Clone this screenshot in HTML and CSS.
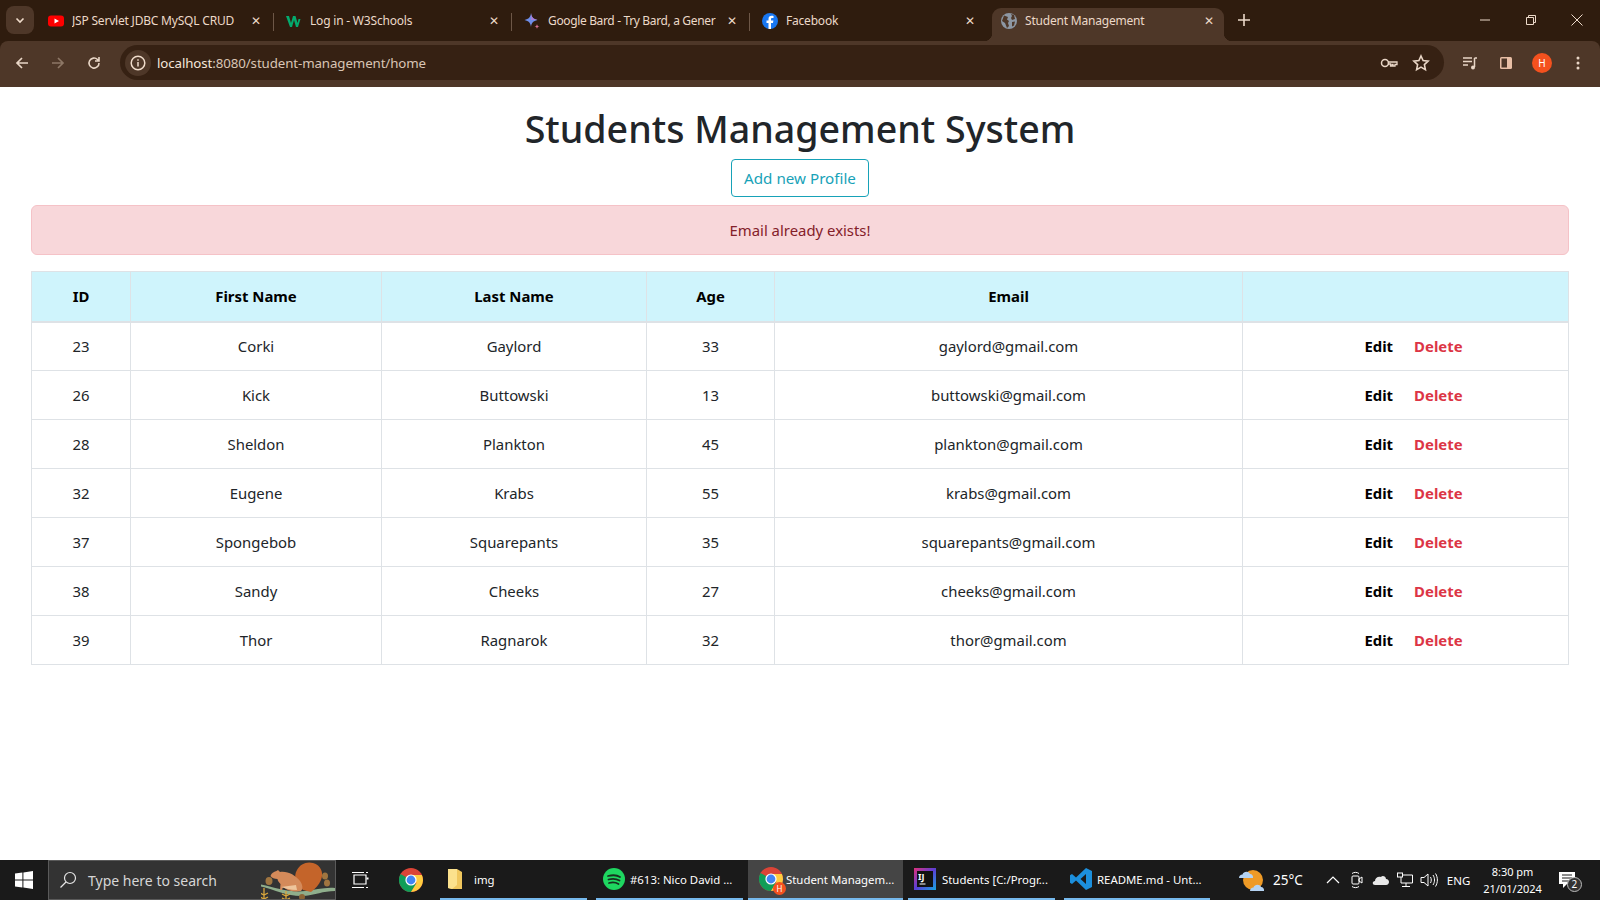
FILE: index.html
```html
<!DOCTYPE html>
<html lang="en">
<head>
    <meta charset="UTF-8">
    <title>Student Management</title>
    <link rel="stylesheet" href="styles.css">
</head>
<body>
    <div class="browser">
        <div class="tab-strip">
            <div class="tab-search">
                <svg width="12" height="12" viewBox="0 0 12 12"><path d="M2.500 4.500 6 8l3.500-3.500" fill="none" stroke="#f0dccb" stroke-width="1.600"/></svg>
            </div>
            <div class="tab">
                <svg class="favicon" viewBox="0 0 16 16"><rect y="2.500" width="16" height="11" rx="3" fill="#f00"/><path d="M6.500 5.500v5L11 8z" fill="#fff"/></svg>
                <span class="tab-title">JSP Servlet JDBC MySQL CRUD</span>
                <span class="tab-close">✕</span>
            </div>
            <div class="tab">
                <svg class="favicon" viewBox="0 0 16 16"><path d="M0 3h3l2 7 2-7h2.500l2 7 1-4h2l-2.500 8h-2L8 7l-2 7H4z" fill="#04aa6d"/></svg>
                <span class="tab-title">Log in - W3Schools</span>
                <span class="tab-close">✕</span>
            </div>
            <div class="tab">
                <svg class="favicon" viewBox="0 0 16 16"><path d="M7 0c.5 4.200 2.200 6 6.500 7C9.200 8 7.500 9.800 7 14 6.500 9.800 4.800 8 .5 7 4.800 6 6.500 4.200 7 0z" fill="#6f8ee8"/><path d="M7 0c.5 4.200 2.200 6 6.500 7H7z" fill="#a87fd8"/><path d="M13 11c.2 1.500.8 2.100 2.500 2.500-1.700.4-2.300 1-2.500 2.500-.2-1.500-.8-2.100-2.500-2.500 1.700-.4 2.300-1 2.500-2.500z" fill="#d56f8f"/></svg>
                <span class="tab-title tab-title-long">Google Bard - Try Bard, a Gener</span>
                <span class="tab-close">✕</span>
            </div>
            <div class="tab">
                <svg class="favicon" viewBox="0 0 16 16"><circle cx="8" cy="8" r="8" fill="#1877f2"/><path d="M9 16v-6h2l.4-2.400H9V6.200c0-.8.300-1.200 1.200-1.200h1.300V3c-.6-.1-1.200-.2-1.800-.2-2 0-3.200 1.200-3.200 3.200v1.600H4.500V10h2v6z" fill="#fff"/></svg>
                <span class="tab-title">Facebook</span>
                <span class="tab-close">✕</span>
            </div>
            <div class="tab tab-active">
                <svg class="favicon" viewBox="0 0 16 16"><circle cx="8" cy="8" r="8" fill="#8d97a3"/><path d="M3 2.500 7 4 6 6.500 8 8l-1 2 1 3-2 2-2-5-3-2zM10 1l3 1 1 4-3 1-1-2 1-2zM11 9l3-.5-1 4-2 1z" fill="#4e3728"/></svg>
                <span class="tab-title">Student Management</span>
                <span class="tab-close">✕</span>
            </div>
            <svg class="new-tab" width="12" height="12" viewBox="0 0 12 12"><path d="M6 0v12M0 6h12" stroke="#ecd9c9" stroke-width="1.600"/></svg>
            <div class="window-controls">
                <svg width="12" height="12" viewBox="0 0 12 12"><path d="M1 6h10" stroke="#ecd9c9"/></svg>
                <svg width="12" height="12" viewBox="0 0 12 12"><path d="M1.500 3.500h7v7h-7zM3.500 3.500v-2h7v7h-2" fill="none" stroke="#ecd9c9"/></svg>
                <svg width="12" height="12" viewBox="0 0 12 12"><path d="M.5.500l11 11M11.500.500l-11 11" stroke="#ecd9c9"/></svg>
            </div>
        </div>
        <div class="toolbar">
            <svg class="nav-icon" viewBox="0 0 16 16"><path d="M14 8H3M8 3 3 8l5 5" fill="none" stroke="#e9d6c6" stroke-width="1.700"/></svg>
            <svg class="nav-icon" viewBox="0 0 16 16"><path d="M2 8h11M8 3l5 5-5 5" fill="none" stroke="#8d7766" stroke-width="1.700"/></svg>
            <svg class="nav-icon" viewBox="0 0 16 16"><path d="M13 8a5 5 0 1 1-1.500-3.500L13 6M13 2v4H9" fill="none" stroke="#e9d6c6" stroke-width="1.600"/></svg>
            <div class="omnibox">
                <div class="site-info">
                    <svg width="16" height="16" viewBox="0 0 16 16"><circle cx="8" cy="8" r="6.800" fill="none" stroke="#f0dccb" stroke-width="1.500"/><path d="M8 7v4.500M8 4.300v1.500" stroke="#f0dccb" stroke-width="1.500"/></svg>
                </div>
                <span class="url">localhost<span class="url-rest">:8080/student-management/home</span></span>
                <svg class="omni-icon" viewBox="0 0 18 18"><circle cx="5" cy="9" r="3.500" fill="none" stroke="#e9d6c6" stroke-width="1.500"/><path d="M8.500 8H17v2.500h-2V12h-2v-1.500h-1V12h-1.500v-2H8.500z" fill="none" stroke="#e9d6c6" stroke-width="1.300"/></svg>
                <svg class="omni-icon" viewBox="0 0 18 18"><path d="m9 2 2.100 4.600 5 .6-3.700 3.400 1 5L9 13.100l-4.400 2.500 1-5L1.900 7.200l5-.6z" fill="none" stroke="#e9d6c6" stroke-width="1.600"/></svg>
            </div>
            <div class="toolbar-right">
                <svg class="nav-icon" viewBox="0 0 16 16"><path d="M1 3h9M1 6.500h9M1 10h5" stroke="#e9d6c6" stroke-width="1.500"/><path d="M12.500 3H15M12.500 3v9" stroke="#e9d6c6" stroke-width="1.500"/><circle cx="11" cy="12.500" r="2" fill="#e9d6c6"/></svg>
                <svg class="nav-icon side-icon" viewBox="0 0 16 16"><rect x="2" y="2" width="12" height="12" rx="1.500" fill="#e9bfa6"/><rect x="3.500" y="3.500" width="5.500" height="9" fill="#4e3728"/></svg>
                <div class="avatar">H</div>
                <svg class="nav-icon" viewBox="0 0 16 16"><circle cx="8" cy="3" r="1.500" fill="#e9d6c6"/><circle cx="8" cy="8" r="1.500" fill="#e9d6c6"/><circle cx="8" cy="13" r="1.500" fill="#e9d6c6"/></svg>
            </div>
        </div>
    </div>

    <main class="page">
        <h1 class="page-title">Students Management System</h1>
        <div class="add-row"><a class="add-btn" href="#">Add new Profile</a></div>
        <div class="alert">Email already exists!</div>
        <table class="students">
            <colgroup>
                <col class="col-id"><col class="col-first"><col class="col-last"><col class="col-age"><col class="col-email"><col>
            </colgroup>
            <thead>
                <tr><th>ID</th><th>First Name</th><th>Last Name</th><th>Age</th><th>Email</th><th></th></tr>
            </thead>
            <tbody>
                <tr><td>23</td><td>Corki</td><td>Gaylord</td><td>33</td><td>gaylord@gmail.com</td><td class="actions"><a class="edit" href="#">Edit</a><a class="delete" href="#">Delete</a></td></tr>
                <tr><td>26</td><td>Kick</td><td>Buttowski</td><td>13</td><td>buttowski@gmail.com</td><td class="actions"><a class="edit" href="#">Edit</a><a class="delete" href="#">Delete</a></td></tr>
                <tr><td>28</td><td>Sheldon</td><td>Plankton</td><td>45</td><td>plankton@gmail.com</td><td class="actions"><a class="edit" href="#">Edit</a><a class="delete" href="#">Delete</a></td></tr>
                <tr><td>32</td><td>Eugene</td><td>Krabs</td><td>55</td><td>krabs@gmail.com</td><td class="actions"><a class="edit" href="#">Edit</a><a class="delete" href="#">Delete</a></td></tr>
                <tr><td>37</td><td>Spongebob</td><td>Squarepants</td><td>35</td><td>squarepants@gmail.com</td><td class="actions"><a class="edit" href="#">Edit</a><a class="delete" href="#">Delete</a></td></tr>
                <tr><td>38</td><td>Sandy</td><td>Cheeks</td><td>27</td><td>cheeks@gmail.com</td><td class="actions"><a class="edit" href="#">Edit</a><a class="delete" href="#">Delete</a></td></tr>
                <tr><td>39</td><td>Thor</td><td>Ragnarok</td><td>32</td><td>thor@gmail.com</td><td class="actions"><a class="edit" href="#">Edit</a><a class="delete" href="#">Delete</a></td></tr>
            </tbody>
        </table>
    </main>

    <footer class="taskbar">
        <div class="start">
            <svg width="18" height="18" viewBox="0 0 18 18"><path d="M0 2.600 7.400 1.600v7H0zM8.400 1.400 18 0v8.600H8.400zM0 9.500h7.400v7L0 15.400zM8.400 9.500H18V18l-9.600-1.400z" fill="#fff"/></svg>
        </div>
        <div class="search-box">
            <svg width="18" height="18" viewBox="0 0 18 18"><circle cx="11" cy="7" r="5.500" fill="none" stroke="#e6e6e6" stroke-width="1.200"/><path d="M7 11 1.500 16.500" stroke="#e6e6e6" stroke-width="1.200"/></svg>
            <span class="search-text">Type here to search</span>
            <svg class="squirrel" width="74" height="40" viewBox="0 0 74 40">
                <path d="M-2 23c16 3 30 9 46 7 10-1 20-4 30-3v3c-12 0-20 4-31 5-16 1-30-7-45-10z" fill="#8fae8c"/>
                <path d="M42 29c-7-6-10-13-6-20 3-6 10-9 16-7 8 2 11 10 8 17-2 5-6 9-10 12z" fill="#c4642a"/>
                <path d="M17 9l2 2c8-1 15 3 20 9 3 4 3 8 1 10-6 1-12 0-15-2l-3-2-1 3h-2l.5-6c-2-2-3-4-3-5-3 0-6-1-7-3 1-3 3-4 6-5z" fill="#d48a5a"/>
                <path d="M20 26c4 1 9 3 16 3l-1-5c-5 1-10 1-15 2z" fill="#eec59c"/>
                <ellipse cx="8" cy="20" rx="3.500" ry="4" fill="#a07540"/>
                <ellipse cx="64" cy="15" rx="3" ry="3.500" fill="#a07540"/>
                <ellipse cx="66" cy="22" rx="3" ry="3.500" fill="#a07540"/>
                <ellipse cx="41" cy="36" rx="3" ry="3" fill="#8c6536"/>
                <path d="M3 27v12M-1 32l4 2 4-2M-1 36l4 2 4-2M25 30v9M21 33l4 2 4-2M21 37l4 2 4-2" fill="none" stroke="#d9a63c" stroke-width="1.300"/>
            </svg>
        </div>
        <div class="pinned">
            <svg width="18" height="18" viewBox="0 0 18 18"><path d="M3 4h12v9H3zM1 1.500h12M1 16.500h12M15 1.500h2M15 16.500h2" fill="none" stroke="#fff" stroke-width="1.200"/><path d="M15.500 6.500h2v2h-2z" fill="#fff"/></svg>
        </div>
        <div class="pinned pinned-chrome">
            <svg width="24" height="24" viewBox="0 0 24 24"><use href="#chrome-logo"/></svg>
        </div>
        <div class="task-item task-files">
            <svg width="16" height="22" viewBox="0 0 16 22"><path d="M0 1h9l5 3v17H4l-4-1z" fill="#f0c75e"/><path d="M0 1h9v16l-5 4-4-1z" fill="#fbe18d"/></svg>
            <span>img</span>
        </div>
        <div class="task-item task-spotify">
            <svg width="22" height="22" viewBox="0 0 22 22"><circle cx="11" cy="11" r="11" fill="#1ed760"/><path d="M5 8c4-1 9-1 12 1M5.500 11.500c3.500-1 8-.7 11 1M6 15c3-.8 7-.6 9.500 1" fill="none" stroke="#17301f" stroke-width="1.800" stroke-linecap="round"/></svg>
            <span>#613: Nico David ...</span>
        </div>
        <div class="task-item task-active">
            <div class="chrome-badge">
                <svg width="24" height="24" viewBox="0 0 24 24"><use href="#chrome-logo"/></svg>
                <span class="badge-h">H</span>
            </div>
            <span>Student Managem...</span>
        </div>
        <div class="task-item task-idea">
            <svg width="22" height="22" viewBox="0 0 22 22"><defs><linearGradient id="idea-edge" x1="0" y1="0" x2="1" y2="1"><stop offset="0" stop-color="#e0317c"/><stop offset=".5" stop-color="#5a3fd6"/><stop offset="1" stop-color="#17a6e0"/></linearGradient></defs><rect width="22" height="22" fill="url(#idea-edge)"/><rect x="3" y="3" width="16" height="16" fill="#111"/><path d="M5.500 16h6" stroke="#fff"/></svg>
            <span class="idea-letters">IJ</span>
            <span>Students [C:/Progr...</span>
        </div>
        <div class="task-item task-code">
            <svg width="24" height="24" viewBox="0 0 24 24"><path d="M17 1 23 4v16l-6 3L7 13.500 3 17l-2-1.200V8.200L3 7l4 3.500zM17 7l-5.500 5 5.500 5z" fill="#1c8fdc"/></svg>
            <span>README.md - Unt...</span>
        </div>
        <div class="tray">
            <svg width="28" height="28" viewBox="0 0 28 28"><circle cx="14" cy="14" r="10" fill="#ee9a26"/><path d="M0 12c0-2 1.500-3.500 3.500-3.500C4.500 5 10 5 11 8c2 0 3.500 2 3 4z" fill="#b5d3f2"/><path d="M11 25c0-2 1.500-3.500 3.500-3.500 1-3.500 6.500-3.500 7.500-.5 2 0 3.500 2 3 4z" fill="#b5d3f2"/></svg>
            <span class="tray-temp">25°C</span>
            <span class="tray-slot tray-first"><svg width="14" height="14" viewBox="0 0 14 14"><path d="M1 10l6-6 6 6" fill="none" stroke="#fff" stroke-width="1.200"/></svg></span>
            <span class="tray-slot"><svg width="16" height="18" viewBox="0 0 16 18"><rect x="3" y="5" width="7" height="8" rx="1" fill="none" stroke="#fff"/><path d="M10 8l3-2v6l-3-2zM3 2.500c2-1.500 5-1.500 7 0M3 15.500c2 1.500 5 1.500 7 0" fill="none" stroke="#fff"/></svg></span>
            <span class="tray-slot"><svg width="18" height="12" viewBox="0 0 18 12"><path d="M3 11c-3 0-3-4 0-4 0-3 3-5 6-4 1-2 5-1 5 2 4 0 4 6 0 6z" fill="#e8e8e8"/></svg></span>
            <span class="tray-slot"><svg width="16" height="16" viewBox="0 0 16 16"><path d="M4 3h11.500v8H4zM9 11v3M5 14.500h8" fill="none" stroke="#fff"/><rect x=".5" y="1" width="5" height="4" fill="#1a1a1a" stroke="#fff"/></svg></span>
            <span class="tray-slot"><svg width="18" height="16" viewBox="0 0 18 16"><path d="M1 5.500h3L8 2v12l-4-3.500H1zM10.500 5c1 2 1 4 0 6M13 3c2 3 2 7 0 10M15.500 1.500c2.500 4 2.500 9 0 13" fill="none" stroke="#fff"/></svg></span>
            <span class="tray-lang">ENG</span>
            <div class="clock"><span>8:30 pm</span><span>21/01/2024</span></div>
            <div class="notify">
                <svg width="18" height="16" viewBox="0 0 18 16"><path d="M0 0h16v12H8l-4 4v-4H0z" fill="#fff"/><path d="M3 3h10M3 6h10M3 9h7" stroke="#1a1a1a"/></svg>
                <span class="notify-count">2</span>
            </div>
        </div>
    </footer>

    <svg class="defs" width="0" height="0">
        <defs>
            <g id="chrome-logo">
                <circle cx="12" cy="12" r="12" fill="#db4437"/>
                <path d="M12 12 1.600 6A12 12 0 0 0 12 24l5-8z" fill="#0f9d58"/>
                <path d="M12 7h10.900A12 12 0 0 1 12 24l5.500-9z" fill="#ffcd40"/>
                <circle cx="12" cy="12" r="5.600" fill="#fff"/>
                <circle cx="12" cy="12" r="4.400" fill="#4285f4"/>
            </g>
        </defs>
    </svg>
</body>
</html>
```

FILE: styles.css
```css
* {
    box-sizing: border-box;
}

html, body {
    height: 100%;
}

body {
    margin: 0;
    display: flex;
    flex-direction: column;
    font-family: "Noto Sans", "Open Sans", sans-serif;
    background: #fff;
    overflow: hidden;
}

/* browser chrome */
.browser {
    flex-shrink: 0;
    background: #2f1c0e;
}

.tab-strip {
    height: 41px;
    display: flex;
    align-items: flex-end;
    padding-left: 6px;
    color: #ecd9c9;
}

.tab-search {
    width: 28px;
    height: 28px;
    margin: 0 2px 7px 0;
    border-radius: 8px;
    background: #4e3728;
    display: flex;
    align-items: center;
    justify-content: center;
}

.tab {
    width: 238px;
    height: 33px;
    padding: 0 10px 8px 12px;
    display: flex;
    align-items: center;
    gap: 8px;
    font-size: 12px;
    position: relative;
}

.tab + .tab::before {
    content: "";
    position: absolute;
    left: -1px;
    top: 5px;
    height: 18px;
    width: 1px;
    background: #6d5747;
}

.tab-active {
    width: 232px;
    margin-left: 4px;
    background: #4e3728;
    border-radius: 9px 9px 0 0;
    padding: 0 7px 8px 9px;
}

.tab-active::before,
.tab-active::after {
    content: "";
    position: absolute;
    bottom: 0;
    width: 8px;
    height: 8px;
}

.tab + .tab-active::before {
    left: -8px;
    top: auto;
    height: 8px;
    width: 8px;
    background: radial-gradient(circle at 0 0, transparent 8px, #4e3728 8.5px);
}

.tab-active::after {
    right: -8px;
    background: radial-gradient(circle at 100% 0, transparent 8px, #4e3728 8.5px);
}

.favicon {
    width: 16px;
    height: 16px;
    flex-shrink: 0;
}

.tab-title {
    flex: 1;
    white-space: nowrap;
    overflow: hidden;
    letter-spacing: -0.2px;
}

.tab-title-long {
    letter-spacing: -0.35px;
}

.tab-close {
    font-size: 12px;
    width: 16px;
    text-align: center;
}

.new-tab {
    margin: 0 0 15px 14px;
}

.window-controls {
    margin-left: auto;
    align-self: flex-start;
    display: flex;
    gap: 34px;
    padding: 14px 17px 0 0;
}

.toolbar {
    height: 46px;
    background: #4e3728;
    border-radius: 8px 8px 0 0;
    display: flex;
    align-items: center;
    padding: 0 0 3px 14px;
}

.nav-icon {
    width: 16px;
    height: 16px;
    margin-right: 20px;
    flex-shrink: 0;
}

.side-icon {
    margin-right: 18px;
}

.omnibox {
    width: 1324px;
    height: 35px;
    flex-shrink: 0;
    margin-left: -2px;
    background: #362113;
    border-radius: 18px;
    display: flex;
    align-items: center;
    padding: 0 14px 0 5px;
    color: #f0dccb;
}

.site-info {
    width: 26px;
    height: 26px;
    border-radius: 50%;
    background: #4e3728;
    display: flex;
    align-items: center;
    justify-content: center;
    margin-right: 6px;
}

.url {
    flex: 1;
    font-size: 13.3px;
    color: #f4e6da;
    letter-spacing: -0.1px;
}

.url-rest {
    color: #d9c5b5;
}

.omni-icon {
    width: 18px;
    height: 18px;
    margin-left: 14px;
}

.toolbar-right {
    display: flex;
    align-items: center;
    margin-left: 18px;
}

.toolbar-right .nav-icon:last-child {
    margin-right: 0;
}

.avatar {
    width: 20px;
    height: 20px;
    margin-right: 18px;
    border-radius: 50%;
    background: #f4511e;
    color: #fff;
    font-size: 10px;
    display: flex;
    align-items: center;
    justify-content: center;
}

/* page content */
.page {
    flex: 1;
    padding: 18px 31px 0;
    color: #212529;
}

.page-title {
    margin: 0 0 6px;
    font-size: 37.6px;
    font-weight: 500;
    line-height: 48px;
    text-align: center;
}

.add-row {
    text-align: center;
    margin-bottom: 8px;
}

.add-btn {
    display: inline-block;
    height: 38px;
    width: 138px;
    line-height: 36px;
    border: 1px solid #17a2b8;
    border-radius: 4px;
    color: #17a2b8;
    font-size: 15.2px;
    text-decoration: none;
    white-space: nowrap;
}

.alert {
    height: 50px;
    margin-bottom: 16px;
    border: 1px solid #f5c2c7;
    border-radius: 6px;
    background: #f8d7da;
    color: #842029;
    font-size: 14.9px;
    line-height: 48px;
    text-align: center;
}

.students {
    width: 100%;
    table-layout: fixed;
    border-collapse: collapse;
    font-size: 14.9px;
    color: #212529;
    text-align: center;
}

.col-id { width: 99px; }
.col-first { width: 251px; }
.col-last { width: 265px; }
.col-age { width: 128px; }
.col-email { width: 468px; }

.students th,
.students td {
    height: 49px;
    padding: 0 8px 1px;
    border: 1px solid #dee2e6;
}

.students th {
    height: 50px;
    background: #cff4fc;
    color: #000;
    font-weight: 700;
    border-bottom-width: 2px;
}

.students .actions {
    padding-left: 24px;
}

.edit,
.delete {
    font-weight: 700;
    text-decoration: none;
}

.edit {
    color: #000;
}

.delete {
    color: #dc3545;
    margin-left: 21px;
}

/* windows taskbar */
.taskbar {
    flex-shrink: 0;
    height: 40px;
    background: #1a1a1a;
    display: flex;
    align-items: center;
    color: #fff;
    font-size: 11.4px;
}

.start {
    width: 48px;
    display: flex;
    justify-content: center;
}

.search-box {
    width: 288px;
    height: 40px;
    background: #333;
    border: 1px solid #5a5a5a;
    display: flex;
    align-items: center;
    padding-left: 10px;
    position: relative;
    overflow: hidden;
}

.search-text {
    margin-left: 11px;
    font-size: 14px;
    color: #d6d6d6;
}

.squirrel {
    position: absolute;
    right: 0;
    top: 0;
}

.pinned {
    width: 48px;
    height: 40px;
    display: flex;
    align-items: center;
    justify-content: center;
}

.pinned-chrome {
    padding-left: 6px;
}

.task-item {
    height: 40px;
    display: flex;
    align-items: center;
    gap: 7px;
    padding-left: 8px;
    border-bottom: 2px solid #76b9ed;
    white-space: nowrap;
    flex-shrink: 0;
    position: relative;
}

.task-files {
    width: 147px;
    margin-left: 8px;
    gap: 10px;
}

.task-spotify {
    width: 147px;
    margin-left: 9px;
    padding-left: 7px;
    gap: 5px;
}

.task-active {
    width: 155px;
    margin-left: 5px;
    padding-left: 11px;
    gap: 3px;
    background: #454545;
}

.chrome-badge {
    position: relative;
    width: 24px;
    height: 24px;
}

.badge-h {
    position: absolute;
    right: -3px;
    bottom: -4px;
    width: 13px;
    height: 13px;
    border-radius: 50%;
    background: #f4511e;
    font-size: 8px;
    line-height: 13px;
    text-align: center;
}

.task-idea {
    width: 147px;
    margin-left: 5px;
    padding-left: 6px;
    gap: 6px;
}

.idea-letters {
    position: absolute;
    left: 10px;
    top: 10px;
    font-size: 9px;
    font-weight: 700;
}

.task-code {
    width: 146px;
    margin-left: 9px;
    padding-left: 5px;
    gap: 4px;
}

.tray {
    flex: 1;
    display: flex;
    align-items: center;
    height: 40px;
    margin-left: 29px;
}

.tray-temp {
    margin-left: 6px;
    font-size: 13.5px;
}

.tray-slot {
    width: 24px;
    display: flex;
    justify-content: center;
}

.tray-first {
    margin-left: 18px;
}

.tray-lang {
    margin-left: 6px;
    font-size: 11.5px;
}

.clock {
    display: flex;
    flex-direction: column;
    align-items: center;
    margin-left: 13px;
    font-size: 11px;
    line-height: 17px;
}

.notify {
    position: relative;
    margin-left: 17px;
    height: 16px;
}

.notify-count {
    position: absolute;
    left: 8px;
    top: 5px;
    width: 15px;
    height: 15px;
    border: 1px solid #bbb;
    border-radius: 50%;
    background: #333;
    font-size: 10px;
    line-height: 13px;
    text-align: center;
}

.defs {
    position: absolute;
}
```
